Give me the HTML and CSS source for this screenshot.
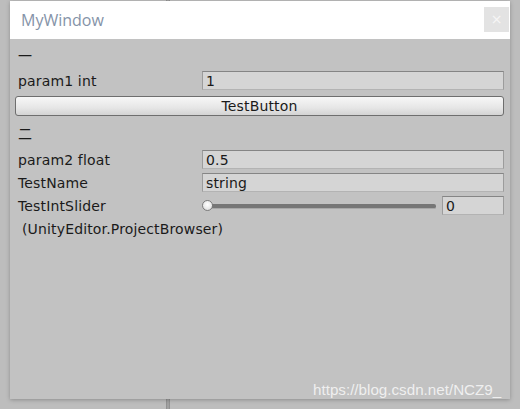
FILE: index.html
```html
<!DOCTYPE html>
<html>
<head>
<meta charset="utf-8">
<link rel="stylesheet" href="styles.css">
</head>
<body>
<div class="desk">
  <div class="bgline top"></div>
  <div class="bgline bottom"></div>
  <div class="window">
    <div class="titlebar">
      <span class="title">MyWindow</span>
      <span class="close">×</span>
    </div>
    <div class="content">
      <div class="row head r1">一</div>
      <div class="row field-row r2">
        <span class="label">param1 int</span>
        <span class="field">1</span>
      </div>
      <div class="row r3"><div class="button">TestButton</div></div>
      <div class="row head r4">二</div>
      <div class="row field-row r5">
        <span class="label">param2 float</span>
        <span class="field">0.5</span>
      </div>
      <div class="row field-row r6">
        <span class="label">TestName</span>
        <span class="field">string</span>
      </div>
      <div class="row field-row r7">
        <span class="label">TestIntSlider</span>
        <div class="slider">
          <div class="track"></div>
          <div class="knob"></div>
        </div>
        <span class="field num">0</span>
      </div>
      <div class="row plain r8">(UnityEditor.ProjectBrowser)</div>
    </div>
  </div>
  <div class="watermark">https://blog.csdn.net/NCZ9_</div>
</div>
</body>
</html>
```
FILE: styles.css
```css
html, body {
  margin: 0;
  padding: 0;
  background: #bdbdbd;
}
.desk {
  position: relative;
  width: 520px;
  height: 409px;
  overflow: hidden;
  padding-top: 1px;
  box-sizing: border-box;
}
.bgline {
  position: absolute;
  left: 166px;
  width: 4px;
  background: linear-gradient(to right, #8a8a8a, #a8a8a8 50%, #8a8a8a);
}
.bgline.top { top: 0; height: 2px; }
.bgline.bottom { top: 398px; height: 11px; }
.window {
  position: relative;
  margin-left: 10px;
  width: 500px;
  height: 398px;
  background: #c2c2c2;
  box-shadow: 0 1px 4px rgba(0,0,0,0.25);
  display: flex;
  flex-direction: column;
}
.titlebar {
  height: 38px;
  background: #ffffff;
  display: flex;
  align-items: center;
  justify-content: space-between;
  padding-left: 11px;
  padding-right: 1px;
}
.title {
  font-family: "Open Sans", "Noto Sans", sans-serif;
  font-size: 16px;
  color: #8593a8;
  margin-top: -1px;
}
.close {
  width: 25px;
  height: 25px;
  background: #e3e3e3;
  color: #f6f6f6;
  font-family: "DejaVu Sans", sans-serif;
  font-size: 14px;
  display: flex;
  align-items: center;
  justify-content: center;
  margin-top: -2px;
}
.content {
  flex: 1;
  display: flex;
  flex-direction: column;
  padding: 0 6px 0 8px;
  font-family: "DejaVu Sans", "Noto Sans CJK SC", sans-serif;
  font-size: 14px;
  letter-spacing: 0.15px;
  color: #1a1a1a;
}
.row {
  display: flex;
  align-items: center;
}
.head { height: 18px; font-family: "Noto Sans CJK SC", sans-serif; font-size: 14px; letter-spacing: 0; }
.r1 { margin-top: 7px; }
.r2 { margin-top: 7px; }
.r3 { margin-top: 6px; height: 20px; }
.r4 { margin-top: 8px; }
.r5 { margin-top: 8px; }
.r6 { margin-top: 4px; }
.r7 { margin-top: 4px; }
.r8 { margin-top: 5px; height: 18px; padding-left: 4px; }
.field-row { height: 19px; }
.r7 { height: 19px; }
.label {
  width: 184px;
  flex: none;
}
.field {
  flex: 1;
  height: 19px;
  box-sizing: border-box;
  background: #d5d5d5;
  border: 1px solid #9c9c9c;
  border-top-color: #858585;
  border-bottom-color: #b3b3b3;
  padding-left: 3px;
  display: flex;
  align-items: center;
}
.field.num {
  flex: none;
  width: 62px;
  margin-left: 6px;
}
.button {
  margin-left: -3px;
  width: 489px;
  height: 20px;
  box-sizing: border-box;
  border: 1px solid #6e6e6e;
  border-radius: 3px;
  background: linear-gradient(to bottom, #f7f7f7, #e6e6e6 60%, #d3d3d3);
  display: flex;
  align-items: center;
  justify-content: center;
}
.slider {
  position: relative;
  width: 234px;
  height: 19px;
  flex: none;
}
.track {
  position: absolute;
  left: 2px;
  right: 0;
  top: 8px;
  height: 4px;
  border-radius: 2px;
  background: #767676;
  border-bottom: 1px solid #a8a8a8;
}
.knob {
  position: absolute;
  left: 0;
  top: 4px;
  width: 11px;
  height: 11px;
  border-radius: 50%;
  box-sizing: border-box;
  border: 1px solid #7c7c7c;
  background: radial-gradient(circle at 50% 40%, #ffffff, #e8e8e8 60%, #cfcfcf);
}
.watermark {
  position: absolute;
  left: 313px;
  top: 381px;
  font-family: "Liberation Sans", Arial, sans-serif;
  font-size: 15.2px;
  color: rgba(255,255,255,0.75);
  white-space: nowrap;
}
```
